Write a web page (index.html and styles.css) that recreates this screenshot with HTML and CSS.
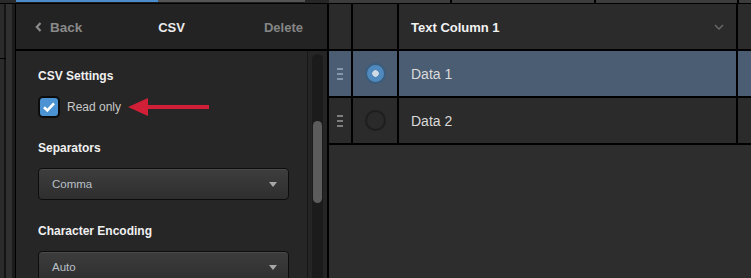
FILE: index.html
```html
<!DOCTYPE html>
<html lang="en">

<head>
  <meta charset="UTF-8" />
  <title>CSV settings</title>
  <link rel="stylesheet" href="styles.css">
</head>

<body>
  <!-- 상단 탭 줄 -->
  <div class="tabs">
    <span class="tab-edge"></span>
    <span class="tab-on"></span>
    <span class="tab-off"></span>
    <span class="tab-dark"></span>
    <span class="tab-grid"></span>
  </div>

  <div class="main">
    <!-- 왼쪽 끝 띠 -->
    <div class="edge">
      <span class="edge-line"></span>
    </div>

    <!-- 설정 패널 -->
    <aside class="panel">
      <header class="panel-head">
        <a href="#" class="back">
          <svg width="7" height="10" viewBox="0 0 7 10"><path d="M5.5 1 L1.8 5 L5.5 9" fill="none" stroke="#8a8a8a" stroke-width="2.2"/></svg>
          Back
        </a>
        <h2>CSV</h2>
        <a href="#" class="delete">Delete</a>
      </header>

      <div class="panel-body">
        <div class="form">
          <h3 class="label first">CSV Settings</h3>
          <label class="check">
            <span class="box">
              <svg width="14" height="12" viewBox="0 0 14 12"><path d="M2 6.2 L5.4 9.4 L12 2.4" fill="none" stroke="#fff" stroke-width="2.6"/></svg>
            </span>
            Read only
            <svg class="arrow" width="82" height="20" viewBox="0 0 82 20"><path d="M0 10 L20 1 L20 8 L81 8 L81 12 L20 12 L20 19 Z" fill="#d21f38"/></svg>
          </label>

          <h3 class="label">Separators</h3>
          <div class="select">Comma<span class="caret"></span></div>

          <h3 class="label enc">Character Encoding</h3>
          <div class="select">Auto<span class="caret"></span></div>
        </div>

        <!-- 스크롤바 -->
        <div class="scroll">
          <div class="track"><div class="thumb"></div></div>
        </div>
      </div>
    </aside>

    <!-- 데이터 표 -->
    <section class="table">
      <div class="grid">
        <div class="cell"></div>
        <div class="cell"></div>
        <div class="cell head">Text Column 1
          <svg width="10" height="6" viewBox="0 0 10 6"><path d="M1 1 L5 5 L9 1" fill="none" stroke="#6a6a6a" stroke-width="1.4"/></svg>
        </div>
        <div class="cell"></div>

        <div class="cell sel"><span class="grip"><i></i><i></i><i></i></span></div>
        <div class="cell sel"><span class="radio on"></span></div>
        <div class="cell sel text">Data 1</div>
        <div class="cell sel"></div>

        <div class="cell"><span class="grip"><i></i><i></i><i></i></span></div>
        <div class="cell"><span class="radio"></span></div>
        <div class="cell text">Data 2</div>
        <div class="cell"></div>
      </div>
    </section>
  </div>
</body>

</html>
```

FILE: styles.css
```css
/* 초기화 */
html,
body,
h2,
h3 {
  margin: 0;
  padding: 0;
}

body {
  width: 751px;
  height: 278px;
  overflow: hidden;
  background-color: #000;
  font-family: "Liberation Sans", Arial, sans-serif;
}

a {
  text-decoration: none;
}

/* 상단 탭 줄 */
.tabs {
  display: flex;
  height: 4px;
}

.tabs span {
  display: block;
  border-bottom: 1px solid #000;
}

.tab-edge {
  width: 16px;
  background-color: #2a2a2a;
}

.tab-on {
  width: 142px;
  background: linear-gradient(#4a8ccc 0 2px, #1c1c1c 2px);
}

.tab-off {
  width: 147px;
  background: linear-gradient(#555 0 2px, #1c1c1c 2px);
}

.tab-dark {
  width: 24px;
  background-color: #262626;
}

.tab-grid {
  flex: 1;
  background: linear-gradient(90deg, #3c3c3c 0 121px, #000 121px 123px, #3c3c3c 123px 265px, #000 265px 267px, #3c3c3c 267px 408px, #000 408px 410px, #3c3c3c 410px);
}

/* 본문 가로 배치 */
.main {
  display: flex;
  height: 274px;
}

/* 왼쪽 끝 띠 */
.edge {
  position: relative;
  width: 15px;
  background: linear-gradient(90deg, #2b2b2b 0 4px, #141414 4px 6px, #303030 6px 12px, #1b1b1b 12px);
}

.edge-line {
  position: absolute;
  top: 54px;
  left: 0;
  width: 6px;
  height: 1px;
  background-color: #000;
}

/* 설정 패널 */
.panel {
  display: flex;
  flex-direction: column;
  width: 311px;
  border-left: 1px solid #000;
  border-right: 2px solid #000;
  background-color: #262626;
}

/* 높이 44 + 위패딩 1 + 보더 2 = 47, 줄어들지 않게 */
.panel-head {
  flex-shrink: 0;
  display: grid;
  grid-template-columns: 1fr auto 1fr;
  align-items: center;
  height: 44px;
  padding: 1px 19px 0;
  border-bottom: 2px solid #000;
  background-color: #232323;
  font-size: 13px;
  font-weight: bold;
}

.back {
  display: flex;
  align-items: center;
  gap: 8px;
  color: #8a8a8a;
  font-size: 13.5px;
}

.panel-head h2 {
  font-size: 13px;
  color: #ececec;
}

.delete {
  justify-self: end;
  margin-right: 5px;
  color: #858585;
}

/* 아래가 잘리는 내용 박스 */
.panel-body {
  display: flex;
  flex: 1;
  min-height: 0;
  overflow: hidden;
}

/* 폼 영역 */
.form {
  flex: 1;
  padding: 0 18px 0 22px;
  border-right: 1px solid #161616;
}

.label {
  margin-top: 23px;
  font-size: 12px;
  line-height: 15px;
  color: #f0f0f0;
}

.label.first {
  margin-top: 18px;
}

.label.enc {
  margin-top: 24px;
}

.check {
  display: flex;
  align-items: center;
  gap: 7px;
  margin-top: 12px;
  font-size: 12px;
  color: #c8c8c8;
}

.box {
  display: flex;
  align-items: center;
  justify-content: center;
  width: 18px;
  height: 18px;
  border: 2px solid #0c0c0c;
  border-radius: 5px;
  background-color: #4b93d2;
}

.select {
  display: flex;
  align-items: center;
  justify-content: space-between;
  height: 30px;
  margin-top: 12px;
  padding: 0 11px 0 13px;
  border: 1px solid #0d0d0d;
  border-radius: 4px;
  background: linear-gradient(#3d3d3d, #2e2e2e);
  box-shadow: inset 0 1px 0 #4a4a4a;
  font-size: 11.5px;
  color: #b9c0c7;
}

.caret {
  width: 0;
  height: 0;
  border-left: 4px solid transparent;
  border-right: 4px solid transparent;
  border-top: 5px solid #a8a8a8;
}

/* 스크롤바 */
.scroll {
  width: 19px;
  padding: 3px 0 0 4px;
  box-sizing: border-box;
  background-color: #252525;
}

.track {
  width: 11px;
  height: 100%;
  padding-top: 67px;
  box-sizing: border-box;
  border-radius: 6px 6px 0 0;
  background-color: #1b1b1b;
}

.thumb {
  width: 9px;
  height: 82px;
  margin-left: 1px;
  border-radius: 5px;
  background-color: #5c5c5c;
}

/* 데이터 표 */
.table {
  flex: 1;
  background-color: #2d2d2d;
}

.grid {
  display: grid;
  grid-template-columns: 22px 44px 337px 1fr;
  grid-auto-rows: 45px;
  gap: 2px;
  padding-bottom: 2px;
  background-color: #000;
}

.cell {
  display: flex;
  align-items: center;
  justify-content: center;
  background-color: #2b2b2b;
}

.cell.sel {
  background-color: #4a5d72;
}

.head,
.text {
  justify-content: space-between;
  padding: 0 12px;
  font-size: 13px;
  font-weight: bold;
  color: #f2f2f2;
}

.head {
  padding-top: 1px;
}

.text {
  font-size: 14px;
  font-weight: normal;
  color: #dadada;
}

/* 드래그 손잡이 */
.grip {
  display: flex;
  flex-direction: column;
  gap: 3px;
}

.grip i {
  display: block;
  width: 6px;
  height: 2px;
  background-color: #7e7e7e;
}

.sel .grip i {
  background-color: #8597aa;
}

/* 라디오 */
.radio {
  width: 17px;
  height: 17px;
  border: 2px solid #1e1e1e;
  border-radius: 50%;
  background-color: #2a2a2a;
}

.radio.on {
  border-color: #3a5d7e;
  background: radial-gradient(circle, #d0dae4 0 3px, #5089bd 3.5px);
}
```
